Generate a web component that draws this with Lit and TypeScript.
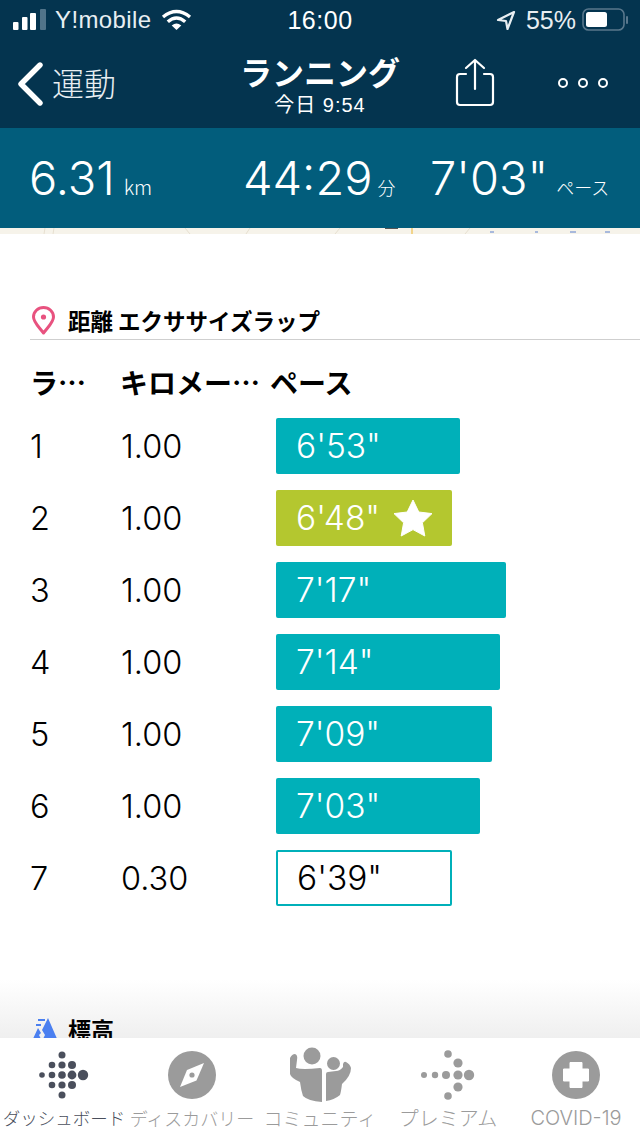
import { LitElement, html, css, svg } from "lit";
import { customElement } from "lit/decorators.js";

const laps = [
  { n: "1", d: "1.00", p: `6'53"`, w: 184, k: "" },
  { n: "2", d: "1.00", p: `6'48"`, w: 176, k: "best" },
  { n: "3", d: "1.00", p: `7'17"`, w: 230, k: "" },
  { n: "4", d: "1.00", p: `7'14"`, w: 224, k: "" },
  { n: "5", d: "1.00", p: `7'09"`, w: 216, k: "" },
  { n: "6", d: "1.00", p: `7'03"`, w: 204, k: "" },
  { n: "7", d: "0.30", p: `6'39"`, w: 176, k: "partial" },
];

const dots = (color: string, list: number[][]) =>
  html`<svg width="56" height="56" viewBox="0 0 56 56">${list.map(
    ([x, y, r]) => svg`<circle cx=${x} cy=${y} r=${r} fill=${color}></circle>`
  )}</svg>`;

const dashDots = [
  [26, 8, 3.5], [16, 18, 3.3], [26, 18, 3.6], [36, 18, 4],
  [6, 28, 2.8], [16, 28, 3.3], [26, 28, 3.8], [36, 28, 4.4], [47, 28, 5.2],
  [16, 38, 3.3], [26, 38, 3.6], [36, 38, 4], [26, 48, 3.5],
];
const premDots = [
  [28, 7, 3.8], [38, 16, 4.6],
  [4, 28, 3], [15, 28, 3.2], [26, 28, 4], [38, 28, 4.6], [49, 28, 5.2],
  [38, 40, 4.6], [28, 49, 3.8],
];

@customElement("app-root")
export class AppRoot extends LitElement {
  static styles = css`
    :host {
      display: flex;
      flex-direction: column;
      width: 640px;
      height: 1136px;
      overflow: hidden;
      background: #fff;
      font-family: "Liberation Sans", "Noto Sans CJK JP", sans-serif;
      color: #000;
      position: relative;
    }
    .top { background: #04344f; height: 128px; color: #fff; flex: none; display: flex; flex-direction: column; }
    .status { height: 40px; display: flex; align-items: center; padding: 0 10px 0 13px; position: relative; font-family: "Liberation Sans", sans-serif; }
    .status .left { display: flex; align-items: center; flex: 1; }
    .status .carrier { font-size: 24px; margin-left: 8px; margin-right: 9px; color: #e8eef2; letter-spacing: 0.4px; }
    .status .time { position: absolute; left: 0; right: 0; text-align: center; font-size: 25px; letter-spacing: 0.5px; top: 6px; }
    .status .right { display: flex; align-items: center; gap: 6px; font-size: 25px; color: #e8eef2; }
    .status .pct { margin-left: 4px; }
    .nav { flex: 1; display: flex; align-items: center; position: relative; }
    .back { display: flex; align-items: center; margin-left: 17px; gap: 7px; font-size: 32px; font-weight: 300; color: #e8eef2; font-family: "Noto Sans CJK JP", sans-serif; }
    .back span { margin-top: -5px; }
    .title { position: absolute; left: 0; right: 0; top: 10px; display: flex; flex-direction: column; align-items: center; }
    .title b { font-size: 32px; line-height: 42px; font-weight: 700; font-family: "Noto Sans CJK JP", sans-serif; }
    .title span { font-size: 20px; line-height: 20px; margin-top: 3px; letter-spacing: 1px; }
    .share { position: absolute; left: 455px; top: 18px; }
    .more { position: absolute; left: 557px; top: 36px; }

    .stats { flex: none; height: 100px; background: #025d7c; color: #fff; position: relative; font-family: Inter, sans-serif; }
    .stat { position: absolute; top: 21px; display: flex; align-items: baseline; white-space: nowrap; }
    .stat .v { font-size: 47px; font-weight: 300; line-height: 58px; }
    .stat .u { font-size: 18px; font-weight: 300; margin-left: 8px; font-family: "Noto Sans CJK JP", sans-serif; }
    .stat .u.km { font-size: 20px; margin-left: 9px; }
    .stat .u.min { margin-left: 5px; }
    .s1 { left: 29px; }
    .s2 { left: 243px; }
    .s3 { left: 430px; }
    .map { flex: none; height: 6px; display: block; }

    .content { flex: 1; padding: 0 0 0 30px; min-height: 0; position: relative; overflow: hidden; }
    .head { margin-top: 70px; height: 35px; display: flex; align-items: flex-start; border-bottom: 1px solid #cfcfcf; font-size: 22.5px; font-weight: 700; font-family: "Noto Sans CJK JP", sans-serif; line-height: 32px; }
    .head svg { margin: 2px 11px 0 0; }
    .cols, .row { display: grid; grid-template-columns: 91px 155px 1fr; align-items: center; }
    .cols { height: 46px; margin-top: 19px; margin-bottom: 13px; font-size: 28px; font-weight: 700; font-family: "Noto Sans CJK JP", sans-serif; line-height: 46px; white-space: nowrap; }
    .cols div:nth-child(2) { margin-left: -1px; }
    .cols div:last-child { margin-left: -6px; }
    .rows { display: flex; flex-direction: column; gap: 16px; }
    .row { height: 56px; font-size: 32.5px; font-family: Inter, sans-serif; font-weight: 300; }
    .bar { height: 56px; box-sizing: border-box; background: #00b0b9; color: #fff; border-radius: 2px; display: flex; align-items: center; padding-left: 20px; font-size: 33.5px; font-family: Inter, sans-serif; font-weight: 300; gap: 13px; }
    .bar.best { background: #b4c72f; }
    .bar.partial { background: #fff; color: #000; border: 2px solid #00b0b9; padding-left: 19px; }
    .fade { position: absolute; left: 0; right: 0; bottom: 0; height: 58px; background: linear-gradient(#fff, #efefef); }
    .elev { position: absolute; left: 30px; top: 780px; display: flex; align-items: center; gap: 10px; font-size: 23px; font-weight: 700; font-family: "Noto Sans CJK JP", sans-serif; line-height: 30px; }
    .elev svg { margin-left: 2px; }

    .tabs { flex: none; height: 98px; background: #fff; display: grid; grid-template-columns: repeat(5, 128px); }
    .tab { display: flex; flex-direction: column; align-items: center; color: #9b9b9b; font-size: 18px; font-family: "Noto Sans CJK JP", sans-serif; font-weight: 300; white-space: nowrap; }
    .tab .ic { height: 56px; margin-top: 9px; display: flex; justify-content: center; align-items: center; }
    .tab.on { color: #4a4f5c; }
    .tab .lb { line-height: 28px; margin-top: 1px; }
    .tab .dash { font-size: 17.5px; }
    .tab .comm { font-size: 19px; }
    .tab .prem { font-size: 20px; }
    .tab .lat { font-family: Inter, sans-serif; font-size: 20px; font-weight: 300; }
  `;

  render() {
    return html`
      <div class="top">
        <div class="status">
          <div class="left">
            <svg width="34" height="22" viewBox="0 0 34 22">
              <rect x="0" y="13" width="5.5" height="8" rx="1" fill="#fff"></rect>
              <rect x="9" y="8" width="5.5" height="13" rx="1" fill="#fff"></rect>
              <rect x="17" y="4" width="6" height="17" rx="1" fill="#fff"></rect>
              <rect x="27" y="0" width="6" height="21" rx="1" fill="#51748a"></rect>
            </svg>
            <span class="carrier">Y!mobile</span>
            <svg width="31" height="22" viewBox="0 0 31 22" fill="none" stroke="#fff" stroke-width="3.4">
              <path d="M2 8 Q15.5 -3 29 8"></path>
              <path d="M6.8 12.8 Q15.5 5 24.2 12.8"></path>
              <path d="M15.5 21 L10.7 16.4 Q15.5 12.4 20.3 16.4Z" fill="#fff" stroke="none"></path>
            </svg>
          </div>
          <div class="time">16:00</div>
          <div class="right">
            <svg width="20" height="22" viewBox="0 0 20 22" fill="none" stroke="#e8eef2" stroke-width="2.2" stroke-linejoin="round">
              <path d="M18 3 L2 11 L10 12 L11.5 20 Z"></path>
            </svg>
            <span class="pct">55%</span>
            <svg width="48" height="24" viewBox="0 0 48 24">
              <rect x="1" y="1" width="41" height="21" rx="5.5" fill="none" stroke="#59778c" stroke-width="1.6"></rect>
              <rect x="4" y="4" width="21" height="15" rx="2.5" fill="#fff"></rect>
              <rect x="44" y="8" width="2" height="8" rx="1" fill="#59778c"></rect>
            </svg>
          </div>
        </div>
        <div class="nav">
          <div class="back">
            <svg width="28" height="44" viewBox="0 0 28 44" fill="none" stroke="#fff" stroke-width="5.4" stroke-linecap="round" stroke-linejoin="round">
              <path d="M23 3 L4 22 L23 41"></path>
            </svg>
            <span>運動</span>
          </div>
          <div class="title"><b>ランニング</b><span>今日 9:54</span></div>
          <svg class="share" width="40" height="50" viewBox="0 0 40 50" fill="none" stroke="#fff" stroke-width="2.2" stroke-linecap="round" stroke-linejoin="round">
            <path d="M11 16 H5 Q2 16 2 19 V44 Q2 47 5 47 H35 Q38 47 38 44 V19 Q38 16 35 16 H29"></path>
            <path d="M20 31 V2 M11 10 L20 2 L29 10"></path>
          </svg>
          <svg class="more" width="52" height="14" viewBox="0 0 52 14" fill="none" stroke="#fff" stroke-width="2">
            <circle cx="6" cy="7" r="4"></circle><circle cx="26" cy="7" r="4"></circle><circle cx="46" cy="7" r="4"></circle>
          </svg>
        </div>
      </div>

      <div class="stats">
        <div class="stat s1"><span class="v">6.31</span><span class="u km">km</span></div>
        <div class="stat s2"><span class="v">44:29</span><span class="u min">分</span></div>
        <div class="stat s3"><span class="v">7'03"</span><span class="u">ペース</span></div>
      </div>
      <svg class="map" width="640" height="6" viewBox="0 0 640 6">
        <rect width="640" height="6" fill="#f6f3ea"></rect>
        <path d="M45 0 L44 6 M54 0 L53 6 M185 0 L190 6 M250 0 L246 6 M340 0 L335 6 M470 0 L465 6" stroke="#e6dfcf" stroke-width="1" fill="none"></path>
        <path d="M412 0 V6" stroke="#f2d48a" stroke-width="2"></path>
        <path d="M385 0 H398" stroke="#555" stroke-width="2"></path>
        <path d="M490 4 H494 M535 4 H538 M570 4 H576 M605 4 H610" stroke="#8fa7d8" stroke-width="1.5"></path>
      </svg>

      <div class="content">
        <div class="head">
          <svg width="27" height="30" viewBox="0 0 27 30" fill="none" stroke="#e8527f" stroke-width="3">
            <path d="M13.5 27 C8 20 3.5 16 3.5 11 A10 9.5 0 0 1 23.5 11 C23.5 16 19 20 13.5 27 Z" stroke-linejoin="round"></path>
            <circle cx="13.5" cy="11" r="2.6" fill="#e8527f" stroke="none"></circle>
          </svg>
          <span>距離 エクササイズラップ</span>
        </div>
        <div class="cols"><div>ラ…</div><div>キロメー…</div><div>ペース</div></div>
        <div class="rows">
          ${laps.map(
            (l) => html`<div class="row">
              <div>${l.n}</div>
              <div>${l.d}</div>
              <div class="bar ${l.k}" style="width:${l.w}px">
                <span>${l.p}</span>
                ${l.k === "best"
                  ? html`<svg width="40" height="38" viewBox="0 0 40 38"><path d="M20 1 L25.8 13 L39 14.6 L29.4 23.8 L31.8 37 L20 30.6 L8.2 37 L10.6 23.8 L1 14.6 L14.2 13 Z" fill="#fff" stroke="#fff" stroke-width="1" stroke-linejoin="round"></path></svg>`
                  : ""}
              </div>
            </div>`
          )}
        </div>
        <div class="fade"></div>
        <div class="elev">
          <svg width="26" height="24" viewBox="0 0 26 24">
            <path d="M0 24 L6 11 L9 16 L7 18 L10 24 L13 18 L10 13 L16 1 L26 24 Z" fill="#4a7ff0"></path>
            <path d="M6 3 H13 M4 8 H9" stroke="#4a7ff0" stroke-width="2"></path>
          </svg>
          <span>標高</span>
        </div>
      </div>

      <div class="tabs">
        <div class="tab on"><div class="ic">${dots("#4a4f5c", dashDots)}</div><div class="lb dash">ダッシュボード</div></div>
        <div class="tab">
          <div class="ic">
            <svg width="48" height="48" viewBox="0 0 48 48">
              <circle cx="24" cy="24" r="24" fill="#9b9b9b"></circle>
              <path d="M36 12 L28.5 29.5 L12 36 L19 19 Z" fill="#fff"></path>
              <circle cx="24" cy="24" r="2.6" fill="#9b9b9b"></circle>
            </svg>
          </div>
          <div class="lb">ディスカバリー</div>
        </div>
        <div class="tab">
          <div class="ic">
            <svg width="100" height="70" viewBox="0 0 100 70" fill="#9b9b9b" style="margin:-7px 0">
              <circle cx="42" cy="16" r="8.5"></circle>
              <circle cx="63.5" cy="23.5" r="6.5"></circle>
              <path d="M20 18 Q22 14 25 14 Q28 15 27 20 L26 28 Q32 30 50 28 Q52 28 52 31 V62 Q38 61 33 56 Q31 50 30 42 Q21 38 20 34 Z"></path>
              <path d="M56 34 Q56 32 58 32 L66 31 Q70 31 73 27 L73 24 Q74 21 76 22 Q80 24 81 28 Q81 36 72 44 Q71 52 70 55 Q64 60 56 61 Z"></path>
            </svg>
          </div>
          <div class="lb comm">コミュニティ</div>
        </div>
        <div class="tab"><div class="ic">${dots("#9b9b9b", premDots)}</div><div class="lb prem">プレミアム</div></div>
        <div class="tab">
          <div class="ic">
            <svg width="48" height="48" viewBox="0 0 48 48">
              <circle cx="24" cy="24" r="24" fill="#9b9b9b"></circle>
              <path d="M18 11.5 H30 V18 H36.5 V30 H30 V36.5 H18 V30 H11.5 V18 H18 Z" fill="#fff" stroke="#fff" stroke-width="1" stroke-linejoin="round"></path>
            </svg>
          </div>
          <div class="lb lat">COVID-19</div>
        </div>
      </div>
    `;
  }
}
